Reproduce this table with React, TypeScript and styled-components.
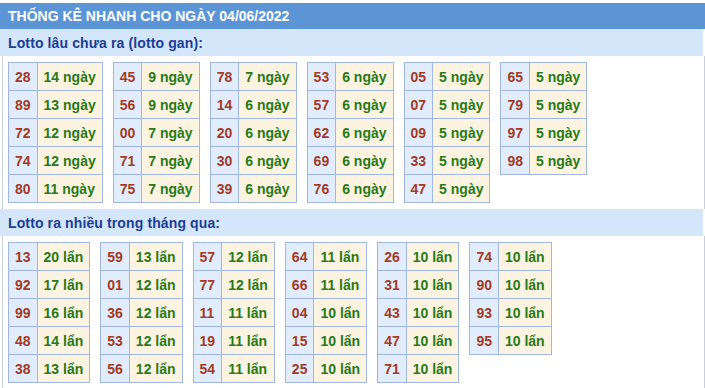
import React from 'react';
import styled, { createGlobalStyle } from 'styled-components';

const GlobalStyle = createGlobalStyle`
  html, body {
    margin: 0;
    padding: 0;
    background: #ffffff;
  }
  body {
    font-family: "Liberation Sans", Arial, sans-serif;
  }
`;

// Styled Components
const Panel = styled.div`
  width: 705px;
  margin-top: 3px;
  display: flex;
  flex-direction: column;
`;

const Header = styled.div`
  height: 26px;
  background: #5b95d6;
  color: #ffffff;
  font-size: 14px;
  font-weight: 700;
  display: flex;
  align-items: center;
  padding-left: 8px;
`;

const SectionTitle = styled.div`
  height: 27px;
  background: #d4e6fa;
  color: #1b3d95;
  font-size: 14px;
  font-weight: 700;
  letter-spacing: 0.12px;
  display: flex;
  align-items: center;
  padding-left: 8px;
  margin-right: 2px;
`;

const Content = styled.div`
  margin-left: 2px;
  border-left: 1px solid #c9ced8;
  border-right: 1px solid #c9ced8;
  padding: 6px 5px;
  display: flex;
  flex-wrap: wrap;
  align-items: flex-start;
  gap: 10px;
`;

const Table = styled.table`
  border-collapse: collapse;
  font-size: 14px;
  font-weight: 700;
`;

const Cell = styled.td<{ $kind: 'num' | 'val' }>`
  height: 28px;
  padding: 0 6px;
  box-sizing: border-box;
  border: 1px solid #9fb7e2;
  white-space: nowrap;
  background: ${p => (p.$kind === 'num' ? '#e1edfc' : '#fdf3e1')};
  color: ${p => (p.$kind === 'num' ? '#a13b25' : '#277a17')};
`;

type Row = [string, string];

const ganGroups: Row[][] = [
  [['28', '14 ngày'], ['89', '13 ngày'], ['72', '12 ngày'], ['74', '12 ngày'], ['80', '11 ngày']],
  [['45', '9 ngày'], ['56', '9 ngày'], ['00', '7 ngày'], ['71', '7 ngày'], ['75', '7 ngày']],
  [['78', '7 ngày'], ['14', '6 ngày'], ['20', '6 ngày'], ['30', '6 ngày'], ['39', '6 ngày']],
  [['53', '6 ngày'], ['57', '6 ngày'], ['62', '6 ngày'], ['69', '6 ngày'], ['76', '6 ngày']],
  [['05', '5 ngày'], ['07', '5 ngày'], ['09', '5 ngày'], ['33', '5 ngày'], ['47', '5 ngày']],
  [['65', '5 ngày'], ['79', '5 ngày'], ['97', '5 ngày'], ['98', '5 ngày']],
];

const hotGroups: Row[][] = [
  [['13', '20 lẩn'], ['92', '17 lẩn'], ['99', '16 lẩn'], ['48', '14 lẩn'], ['38', '13 lẩn']],
  [['59', '13 lẩn'], ['01', '12 lẩn'], ['36', '12 lẩn'], ['53', '12 lẩn'], ['56', '12 lẩn']],
  [['57', '12 lẩn'], ['77', '12 lẩn'], ['11', '11 lẩn'], ['19', '11 lẩn'], ['54', '11 lẩn']],
  [['64', '11 lẩn'], ['66', '11 lẩn'], ['04', '10 lẩn'], ['15', '10 lẩn'], ['25', '10 lẩn']],
  [['26', '10 lẩn'], ['31', '10 lẩn'], ['43', '10 lẩn'], ['47', '10 lẩn'], ['71', '10 lẩn']],
  [['74', '10 lẩn'], ['90', '10 lẩn'], ['93', '10 lẩn'], ['95', '10 lẩn']],
];

function Group({ rows }: { rows: Row[] }) {
  return (
    <Table>
      <tbody>
        {rows.map(([num, val]) => (
          <tr key={num}>
            <Cell $kind="num">{num}</Cell>
            <Cell $kind="val">{val}</Cell>
          </tr>
        ))}
      </tbody>
    </Table>
  );
}

function App() {
  return (
    <>
      <GlobalStyle />
      <Panel>
        <Header>THỐNG KÊ NHANH CHO NGÀY 04/06/2022</Header>
        <SectionTitle>Lotto lâu chưa ra (lotto gan):</SectionTitle>
        <Content>
          {ganGroups.map((rows, i) => (
            <Group key={i} rows={rows} />
          ))}
        </Content>
        <SectionTitle>Lotto ra nhiều trong tháng qua:</SectionTitle>
        <Content>
          {hotGroups.map((rows, i) => (
            <Group key={i} rows={rows} />
          ))}
        </Content>
      </Panel>
    </>
  );
}

export default App;
